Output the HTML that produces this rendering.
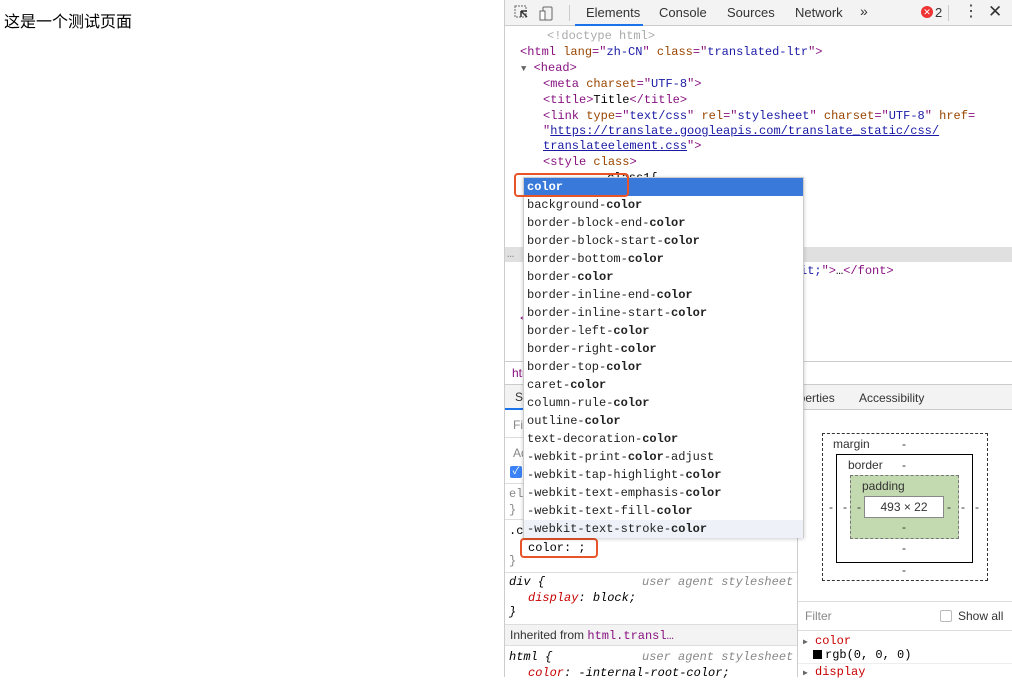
<!DOCTYPE html>
<html><head><meta charset="utf-8">
<style>
*{margin:0;padding:0;box-sizing:border-box}
body{width:1012px;height:677px;overflow:hidden;background:#fff;position:relative;font-family:"Liberation Sans","Noto Sans CJK SC",sans-serif}
.a{position:absolute;white-space:nowrap}
.m{font-family:"Liberation Mono","DejaVu Sans Mono",monospace;font-size:12px;line-height:16px}
.tag{color:#881280}.at{color:#994500}.av{color:#1a1aa6}.g{color:#aaa}
.s{font-size:12px;color:#333}
.dd div{height:18px;line-height:18px;padding-left:3px}
.dd b{font-weight:bold}
</style></head><body>
<div class="a" style="left:4px;top:8px;font-size:16px;color:#000">这是一个测试页面</div>

<div class="a" style="left:504px;top:0;width:508px;height:677px;border-left:1px solid #ccc;background:#fff"></div>
<!-- toolbar -->
<div class="a" style="left:505px;top:0;width:507px;height:26px;background:#f3f3f3;border-bottom:1px solid #ccc"></div>
<svg class="a" style="left:513px;top:4px" width="46" height="18"><rect x="2" y="2" width="11" height="11" fill="none" stroke="#666" stroke-dasharray="2 1"/><path d="M8 7l6 6M8 7v6M8 7h6" stroke="#333" stroke-width="1.5" fill="none"/><rect x="30" y="3" width="9" height="13" rx="1" fill="none" stroke="#666"/><rect x="27" y="7" width="5" height="9" fill="#fff" stroke="#666"/></svg>
<div class="a" style="left:569px;top:5px;width:1px;height:16px;background:#ccc"></div>
<div class="a s" style="left:586px;top:5px;font-size:13px">Elements</div>
<div class="a" style="left:575px;top:24px;width:68px;height:2px;background:#1a73e8"></div>
<div class="a s" style="left:659px;top:5px;font-size:13px">Console</div>
<div class="a s" style="left:727px;top:5px;font-size:13px">Sources</div>
<div class="a s" style="left:795px;top:5px;font-size:13px">Network</div>
<div class="a s" style="left:860px;top:3px;font-size:14px">»</div>
<div class="a" style="left:921px;top:6px;width:12px;height:12px;border-radius:6px;background:#e33;color:#fff;font-size:9px;line-height:12px;text-align:center">✕</div>
<div class="a s" style="left:935px;top:5px;font-size:13px">2</div>
<div class="a" style="left:948px;top:5px;width:1px;height:16px;background:#ccc"></div>
<div class="a s" style="left:963px;top:2px;font-size:16px;line-height:20px">⋮</div>
<div class="a s" style="left:988px;top:2px;font-size:17px">✕</div>

<!-- elements tree -->
<div class="a m g" style="left:547px;top:28px">&lt;!doctype html&gt;</div>
<div class="a m" style="left:520px;top:44px"><span class="tag">&lt;html</span> <span class="at">lang</span><span class="tag">="</span><span class="av">zh-CN</span><span class="tag">"</span> <span class="at">class</span><span class="tag">="</span><span class="av">translated-ltr</span><span class="tag">"&gt;</span></div>
<div class="a m" style="left:521px;top:60px"><span style="color:#666;font-size:9px">▼</span> <span class="tag">&lt;head&gt;</span></div>
<div class="a m" style="left:543px;top:76px"><span class="tag">&lt;meta</span> <span class="at">charset</span><span class="tag">="</span><span class="av">UTF-8</span><span class="tag">"&gt;</span></div>
<div class="a m" style="left:543px;top:92px"><span class="tag">&lt;title&gt;</span>Title<span class="tag">&lt;/title&gt;</span></div>
<div class="a m" style="left:543px;top:108px"><span class="tag">&lt;link</span> <span class="at">type</span><span class="tag">="</span><span class="av">text/css</span><span class="tag">"</span> <span class="at">rel</span><span class="tag">="</span><span class="av">stylesheet</span><span class="tag">"</span> <span class="at">charset</span><span class="tag">="</span><span class="av">UTF-8</span><span class="tag">"</span> <span class="at">href</span><span class="tag">=</span></div>
<div class="a m" style="left:543px;top:123px"><span class="tag">"</span><span style="color:#1a1aa6;text-decoration:underline">https://translate.googleapis.com/translate_static/css/</span></div>
<div class="a m" style="left:543px;top:138px"><span style="color:#1a1aa6;text-decoration:underline">translateelement.css</span><span class="tag">"&gt;</span></div>
<div class="a m" style="left:543px;top:154px"><span class="tag">&lt;style</span> <span class="at">class</span><span class="tag">&gt;</span></div>
<div class="a m" style="left:600px;top:170px">.class1{</div>
<div class="a" style="left:505px;top:247px;width:507px;height:15px;background:#e0e0e0"></div>
<div class="a m" style="left:507px;top:246px;color:#888">…</div>
<div class="a m" style="left:800px;top:263px"><span class="av">it;</span><span class="tag">"&gt;</span>…<span class="tag">&lt;/font&gt;</span></div>
<div class="a m tag" style="left:520px;top:311px">&lt;</div>
<!-- breadcrumb -->
<div class="a" style="left:505px;top:361px;width:507px;height:1px;background:#ccc"></div>
<div class="a" style="left:512px;top:366px;font-size:12px;color:#881280">htm</div>
<div class="a" style="left:505px;top:384px;width:507px;height:26px;background:#f3f3f3;border-top:1px solid #ccc;border-bottom:1px solid #ccc"></div>
<div class="a s" style="left:515px;top:390px">Styles</div>
<div class="a" style="left:505px;top:408px;width:40px;height:2px;background:#1a73e8"></div>
<div class="a s" style="left:780px;top:391px">Properties</div>
<div class="a s" style="left:859px;top:391px">Accessibility</div>
<!-- styles pane -->
<div class="a" style="left:797px;top:410px;width:1px;height:267px;background:#ccc"></div>
<div class="a s" style="left:513px;top:418px;color:#888">Filter</div>
<div class="a" style="left:505px;top:437px;width:292px;height:1px;background:#ddd"></div>
<div class="a s" style="left:513px;top:446px;color:#888">Add</div>
<div class="a" style="left:510px;top:466px;width:12px;height:12px;background:#3b82f6;border-radius:2px;color:#fff;font-size:10px;line-height:12px;text-align:center">✓</div>
<div class="a" style="left:505px;top:483px;width:292px;height:1px;background:#ddd"></div>
<div class="a m" style="left:509px;top:486px;color:#888">element.style {</div>
<div class="a m" style="left:509px;top:502px;color:#888">}</div>
<div class="a" style="left:505px;top:519px;width:292px;height:1px;background:#ddd"></div>
<div class="a m" style="left:509px;top:523px">.class1 {</div>
<div class="a m" style="left:528px;top:540px">color: ;</div>
<div class="a" style="left:520px;top:538px;width:78px;height:20px;border:2px solid #e8542a;border-radius:4px"></div>
<div class="a m" style="left:509px;top:553px;color:#888">}</div>
<div class="a" style="left:505px;top:572px;width:292px;height:1px;background:#ddd"></div>
<div class="a m" style="left:509px;top:574px;font-style:italic">div {</div>
<div class="a m" style="left:642px;top:574px;font-style:italic;color:#888">user agent stylesheet</div>
<div class="a m" style="left:528px;top:590px;font-style:italic"><span style="color:#c80000">display</span>: block;</div>
<div class="a m" style="left:509px;top:604px;font-style:italic">}</div>
<div class="a" style="left:505px;top:624px;width:292px;height:22px;background:#f3f3f3;border-top:1px solid #ddd;border-bottom:1px solid #ddd"></div>
<div class="a s" style="left:510px;top:628px">Inherited from <span class="m tag">html.transl…</span></div>
<div class="a m" style="left:509px;top:649px;font-style:italic">html {</div>
<div class="a m" style="left:642px;top:649px;font-style:italic;color:#888">user agent stylesheet</div>
<div class="a m" style="left:528px;top:665px;font-style:italic"><span style="color:#c80000">color</span>: -internal-root-color;</div>
<!-- box model -->
<div class="a" style="left:822px;top:433px;width:166px;height:148px;border:1px dashed #333"></div>
<div class="a s" style="left:833px;top:437px">margin</div><div class="a s" style="left:902px;top:437px">-</div>
<div class="a" style="left:836px;top:454px;width:137px;height:109px;border:1px solid #000"></div>
<div class="a s" style="left:848px;top:458px">border</div><div class="a s" style="left:902px;top:458px">-</div>
<div class="a" style="left:850px;top:475px;width:109px;height:64px;border:1px dashed #777;background:#c3d9b0"></div>
<div class="a s" style="left:862px;top:479px">padding</div>
<div class="a" style="left:864px;top:496px;width:80px;height:22px;border:1px solid #888;background:#fff;font-size:12px;text-align:center;line-height:20px;color:#333">493 × 22</div>
<div class="a s" style="left:902px;top:520px">-</div><div class="a s" style="left:902px;top:541px">-</div><div class="a s" style="left:902px;top:563px">-</div>
<div class="a s" style="left:829px;top:500px">-</div><div class="a s" style="left:843px;top:500px">-</div><div class="a s" style="left:857px;top:500px">-</div>
<div class="a s" style="left:947px;top:500px">-</div><div class="a s" style="left:961px;top:500px">-</div><div class="a s" style="left:975px;top:500px">-</div>
<div class="a" style="left:798px;top:601px;width:214px;height:1px;background:#ddd"></div>
<div class="a s" style="left:805px;top:609px;color:#888">Filter</div>
<div class="a" style="left:940px;top:610px;width:12px;height:12px;border:1px solid #bbb;border-radius:2px"></div>
<div class="a s" style="left:958px;top:609px">Show all</div>
<div class="a" style="left:798px;top:630px;width:214px;height:1px;background:#ddd"></div>
<div class="a m" style="left:803px;top:633px"><span style="font-size:8px;color:#666">▶</span> <span style="color:#c80000">color</span></div>
<div class="a" style="left:813px;top:650px;width:9px;height:9px;background:#000"></div>
<div class="a m" style="left:825px;top:647px">rgb(0, 0, 0)</div>
<div class="a" style="left:798px;top:663px;width:214px;height:1px;background:#eee"></div>
<div class="a m" style="left:803px;top:664px"><span style="font-size:8px;color:#666">▶</span> <span style="color:#c80000">display</span></div>

<!-- autocomplete dropdown -->
<div class="a m dd" style="left:523px;top:177px;width:281px;height:361px;background:#fff;border:1px solid #ccc;box-shadow:0 1px 4px rgba(0,0,0,.2);line-height:18px;color:#222">
<div style="background:#3879d9;color:#fff"><b>color</b></div>
<div>background-<b>color</b></div>
<div>border-block-end-<b>color</b></div>
<div>border-block-start-<b>color</b></div>
<div>border-bottom-<b>color</b></div>
<div>border-<b>color</b></div>
<div>border-inline-end-<b>color</b></div>
<div>border-inline-start-<b>color</b></div>
<div>border-left-<b>color</b></div>
<div>border-right-<b>color</b></div>
<div>border-top-<b>color</b></div>
<div>caret-<b>color</b></div>
<div>column-rule-<b>color</b></div>
<div>outline-<b>color</b></div>
<div>text-decoration-<b>color</b></div>
<div>-webkit-print-<b>color</b>-adjust</div>
<div>-webkit-tap-highlight-<b>color</b></div>
<div>-webkit-text-emphasis-<b>color</b></div>
<div>-webkit-text-fill-<b>color</b></div>
<div style="background:#eef2f8">-webkit-text-stroke-<b>color</b></div>
</div>
<div class="a" style="left:514px;top:173px;width:115px;height:24px;border:2px solid #e8542a;border-radius:4px"></div>
</body></html>
